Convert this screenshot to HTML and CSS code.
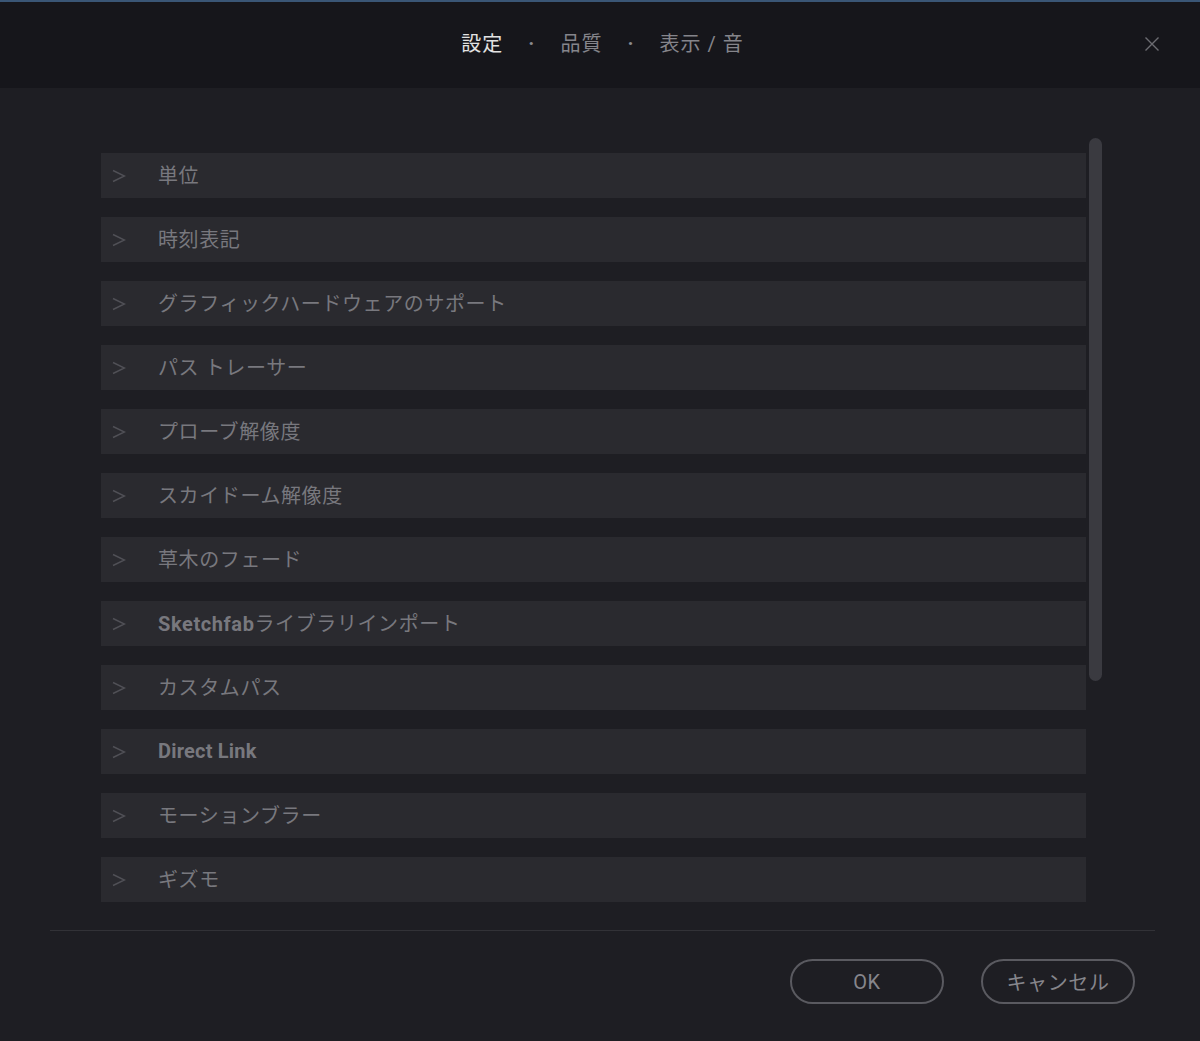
FILE: index.html
```html
<!DOCTYPE html>
<html lang="ja">
<head>
<meta charset="UTF-8">
<meta name="viewport" content="width=device-width, initial-scale=1.0">
<title>設定</title>
<link rel="stylesheet" href="styles.css">
</head>
<body>

<header class="dialog-header">
    <div></div>
    <nav class="tabs">
        <span class="tab active">設定</span>
        <span class="sep">·</span>
        <span class="tab">品質</span>
        <span class="sep">·</span>
        <span class="tab">表示 / 音</span>
    </nav>
    <button class="close-btn" aria-label="閉じる">
        <svg width="16" height="16" viewBox="0 0 16 16"><path d="M1.5 1.5 L14.5 14.5 M14.5 1.5 L1.5 14.5" stroke="#6c6c72" stroke-width="1.4" fill="none"/></svg>
    </button>
</header>

<div class="content">
    <div class="scroll-area">
        <div class="list">
            <div class="row"><svg class="chev" width="14" height="14" viewBox="0 0 14 14"><path d="M1 1.5 L12.5 7 L1 12.5" stroke="#505056" stroke-width="1.5" fill="none"/></svg><span class="label">単位</span></div>
            <div class="row"><svg class="chev" width="14" height="14" viewBox="0 0 14 14"><path d="M1 1.5 L12.5 7 L1 12.5" stroke="#505056" stroke-width="1.5" fill="none"/></svg><span class="label">時刻表記</span></div>
            <div class="row"><svg class="chev" width="14" height="14" viewBox="0 0 14 14"><path d="M1 1.5 L12.5 7 L1 12.5" stroke="#505056" stroke-width="1.5" fill="none"/></svg><span class="label">グラフィックハードウェアのサポート</span></div>
            <div class="row"><svg class="chev" width="14" height="14" viewBox="0 0 14 14"><path d="M1 1.5 L12.5 7 L1 12.5" stroke="#505056" stroke-width="1.5" fill="none"/></svg><span class="label">パス トレーサー</span></div>
            <div class="row"><svg class="chev" width="14" height="14" viewBox="0 0 14 14"><path d="M1 1.5 L12.5 7 L1 12.5" stroke="#505056" stroke-width="1.5" fill="none"/></svg><span class="label">プローブ解像度</span></div>
            <div class="row"><svg class="chev" width="14" height="14" viewBox="0 0 14 14"><path d="M1 1.5 L12.5 7 L1 12.5" stroke="#505056" stroke-width="1.5" fill="none"/></svg><span class="label">スカイドーム解像度</span></div>
            <div class="row"><svg class="chev" width="14" height="14" viewBox="0 0 14 14"><path d="M1 1.5 L12.5 7 L1 12.5" stroke="#505056" stroke-width="1.5" fill="none"/></svg><span class="label">草木のフェード</span></div>
            <div class="row"><svg class="chev" width="14" height="14" viewBox="0 0 14 14"><path d="M1 1.5 L12.5 7 L1 12.5" stroke="#505056" stroke-width="1.5" fill="none"/></svg><span class="label"><b>Sketchfab</b>ライブラリインポート</span></div>
            <div class="row"><svg class="chev" width="14" height="14" viewBox="0 0 14 14"><path d="M1 1.5 L12.5 7 L1 12.5" stroke="#505056" stroke-width="1.5" fill="none"/></svg><span class="label">カスタムパス</span></div>
            <div class="row"><svg class="chev" width="14" height="14" viewBox="0 0 14 14"><path d="M1 1.5 L12.5 7 L1 12.5" stroke="#505056" stroke-width="1.5" fill="none"/></svg><span class="label"><b class="tight">Direct Link</b></span></div>
            <div class="row"><svg class="chev" width="14" height="14" viewBox="0 0 14 14"><path d="M1 1.5 L12.5 7 L1 12.5" stroke="#505056" stroke-width="1.5" fill="none"/></svg><span class="label">モーションブラー</span></div>
            <div class="row"><svg class="chev" width="14" height="14" viewBox="0 0 14 14"><path d="M1 1.5 L12.5 7 L1 12.5" stroke="#505056" stroke-width="1.5" fill="none"/></svg><span class="label">ギズモ</span></div>
        </div>
        <div class="scrollbar"></div>
    </div>

    <hr class="divider">

    <div class="footer">
        <button class="btn">OK</button>
        <button class="btn">キャンセル</button>
    </div>
</div>

</body>
</html>
```

FILE: styles.css
```css
/* Global styles */
body {
    margin: 0;
    padding: 0;
    background-color: #1e1e23;
    font-family: Roboto, "Noto Sans CJK JP", sans-serif;
    color: #77777d;
}

/* Header with tabs */
.dialog-header {
    height: 86px;
    border-top: 2px solid #3a5676;
    background-color: #16161b;
    display: grid;
    grid-template-columns: 1fr auto 1fr;
    align-items: center;
}
.tabs {
    display: flex;
    align-items: center;
    gap: 25px;
    font-size: 20px;
    letter-spacing: 1px;
    margin-left: 5px;
    margin-top: -5px;
}
.tab {
    color: #85858b;
}
.tab.active {
    color: #e2e2e2;
}
.sep {
    color: #8a8a90;
    font-size: 20px;
    font-weight: 700;
}
.close-btn {
    justify-self: end;
    margin-right: 40px;
    margin-top: -3px;
    padding: 0;
    border: none;
    background: none;
    width: 16px;
    height: 16px;
}

/* List */
.content {
    padding-top: 50px;
}
.scroll-area {
    display: flex;
    align-items: flex-start;
}
.list {
    margin-left: 101px;
    width: 985px;
    padding-top: 15px;
    display: flex;
    flex-direction: column;
    gap: 19px;
}
.row {
    height: 45px;
    background-color: #2a2a2f;
    display: flex;
    align-items: center;
    padding-left: 11px;
}
.chev {
    flex: none;
}
.label {
    margin-left: 32px;
    margin-top: -2px;
    font-size: 20px;
    letter-spacing: 0.6px;
    color: #78787e;
    white-space: nowrap;
}
.label b {
    font-weight: 700;
}
.label .tight {
    letter-spacing: 0.2px;
}
.scrollbar {
    margin-left: 3px;
    width: 13px;
    height: 543px;
    border-radius: 7px;
    background-color: #3a3a40;
}

/* Footer */
.divider {
    margin: 28px 45px 0 50px;
    border: none;
    border-top: 1px solid #323237;
}
.footer {
    display: flex;
    justify-content: flex-end;
    gap: 37px;
    padding: 28px 65px 0 0;
}
.btn {
    width: 154px;
    height: 45px;
    border: 2px solid #5a5a60;
    border-radius: 23px;
    background: transparent;
    color: #86868c;
    font-family: Roboto, "Noto Sans CJK JP", sans-serif;
    font-size: 20px;
    letter-spacing: 0.6px;
}
```
